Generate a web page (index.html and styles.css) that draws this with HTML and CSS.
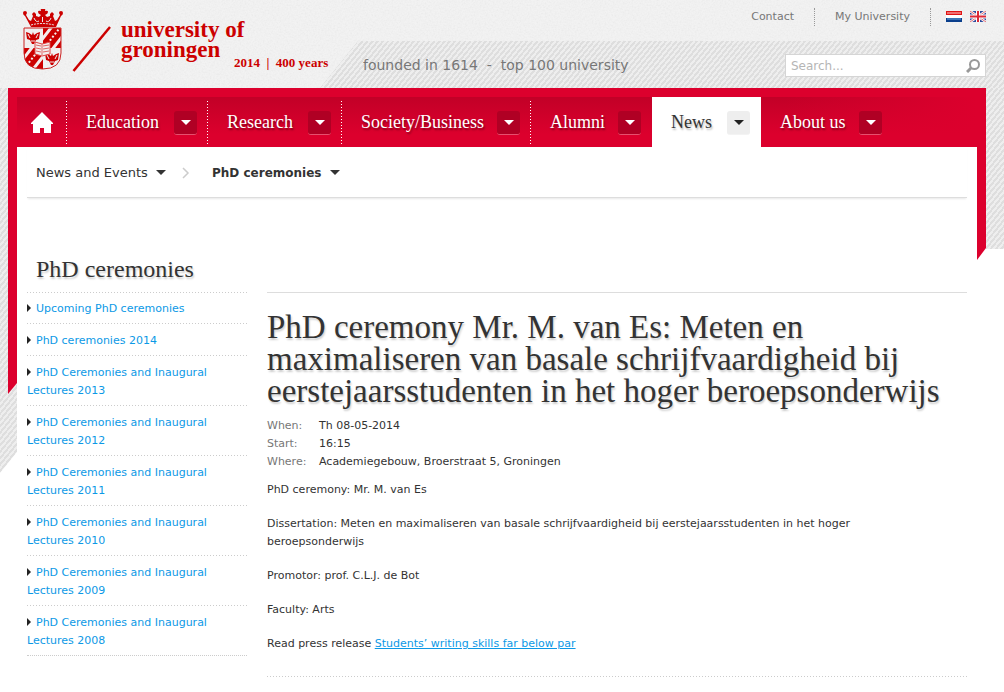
FILE: index.html
```html
<!DOCTYPE html>
<html lang="en">
<head>
<meta charset="utf-8">
<title>PhD ceremony Mr. M. van Es | University of Groningen</title>
<link rel="stylesheet" href="styles.css">
</head>
<body>
<header class="masthead">
  <a class="logo" href="#" aria-label="University of Groningen">
    <svg class="crest" width="40" height="62" viewBox="0 0 40 62" aria-hidden="true">
      <path fill="#c00" d="M0 4q0-2 2-2t2 2l-1 2 3 5 2 1 2-5-1-2 2-2 2 2v2l3 1 2-2q-3-1-3-3t3-1q-1-3 2-3t2 3q3-1 3 1t-3 3l2 2 3-1V5l2-2 2 2-1 2 2 5 2-1 3-5-1-2q0-2 2-2t2 2-2 3l-5 11H8L2 7Q0 6 0 4z"/>
      <path d="M11 9q2 5 5 3M28 9q-2 5-5 3M19.500 8v5" stroke="#eee" fill="none"/>
      <path d="M8 16q11-3 23 0" stroke="#eee" stroke-dasharray="2 1" fill="none"/>
      <clipPath id="shield"><path d="M1 19h37v25q0 16-18.500 16Q1 60 1 44z"/></clipPath>
      <g clip-path="url(#shield)">
        <path d="M20 18h19v21H20zM0 39h20v22H0z" fill="#c00"/>
        <path d="M17 33 31 15M28 42 42 24M-3 54 11 36M8 63 22 45" stroke="#f3eded" stroke-width="3"/>
        <path d="M22 38 39 16M1 60 18 38" stroke="#f3eded" stroke-width="2" stroke-dasharray="2 2"/>
        <path d="M3 23l3 1 3 2 1-3 1 3 3-2 3-1-1 7-3 1-2 4h-2l-2-4-3-1zM22 44l3 1 3 2 1-3 1 3 3-2 3-1-1 7-3 1-2 4h-2l-2-4-3-1z" fill="#c00"/>
        <path d="M5 25l2 4M15 25l-2 4M8 32h4M24 46l2 4M34 46l-2 4M27 53h4" stroke="#eee"/>
        <path d="M12 33l7 2 8-2v12l-8 2-7-2z" fill="#f3eded" stroke="#d44"/>
        <path d="M13 36l5 1m2 0 6-1M13 39l5 1m2 0 6-1M13 42l5 1m2 0 6-1M19 35v11" stroke="#d66"/>
      </g>
      <path d="M1 19h37v25q0 16-18.500 16Q1 60 1 44z" fill="none" stroke="#c22"/>
    </svg>
    <svg class="slash" width="40" height="46" viewBox="0 0 40 46" aria-hidden="true"><path d="M1.500 45 38 1" stroke="#c00" stroke-width="2.500"/></svg>
    <span class="wordmark">university of<br>groningen</span>
    <span class="jubilee">2014&nbsp; | &nbsp;400 years</span>
  </a>
  <nav class="utility" aria-label="Utility">
    <a href="#">Contact</a>
    <a href="#">My University</a>
    <span class="flags">
      <a href="#" aria-label="Nederlands"><svg width="16" height="11" viewBox="0 0 16 11"><path fill="#fff" d="M0 0h16v11H0z"/><path fill="#e01515" d="M0 0h16v4H0z"/><path fill="#ef7070" d="M1 1h14v2H1z"/><path fill="#0a3f8c" d="M0 7h16v4H0z"/><path fill="#3a74b5" d="M1 7h14v2H1z"/></svg></a>
      <a href="#" aria-label="English"><svg width="16" height="11" viewBox="0 0 16 11"><path fill="#2d4a9d" d="M0 0h16v11H0z"/><path d="M0 0l16 11M16 0 0 11" stroke="#fff" stroke-width="2.500"/><path d="M0 0l16 11M16 0 0 11" stroke="#e06a70"/><path d="M8 0v11M0 5.500h16" stroke="#fff" stroke-width="4"/><path d="M8 0v11M0 5.500h16" stroke="#dc2938" stroke-width="2"/></svg></a>
    </span>
  </nav>
  <div class="banner">
    <p class="slogan">founded in 1614&nbsp; -&nbsp; top 100 university</p>
    <form class="search" role="search">
      <input type="search" aria-label="Search" placeholder="Search...">
      <button type="button" aria-label="Search"><svg width="14" height="14" viewBox="0 0 14 14"><circle cx="8.500" cy="5.500" r="4.500" fill="none" stroke="#999" stroke-width="2"/><path d="M5 9l-4 4" stroke="#999" stroke-width="3"/></svg></button>
    </form>
  </div>
</header>

<div class="frame">
  <div class="stripes stripes-left"></div>
  <div class="stripes stripes-right"></div>
  <div class="top-bar"></div>
  <div class="rail rail-left"></div>
  <div class="rail rail-right"></div>

  <div class="sheet">
    <nav class="main-nav" aria-label="Main">
      <a class="home" href="#" aria-label="Home"><svg width="22" height="22" viewBox="0 0 22 22"><path fill="#fff" d="M11 0 0 11v1h2v9h7v-5h4v5h7v-9h2v-1z"/></svg></a>
      <div class="item education"><a href="#">Education</a><button type="button" aria-label="Education menu"><i class="caret"></i></button></div>
      <div class="item research"><a href="#">Research</a><button type="button" aria-label="Research menu"><i class="caret"></i></button></div>
      <div class="item society"><a href="#">Society/Business</a><button type="button" aria-label="Society/Business menu"><i class="caret"></i></button></div>
      <div class="item alumni"><a href="#">Alumni</a><button type="button" aria-label="Alumni menu"><i class="caret"></i></button></div>
      <div class="item active"><a href="#">News</a><button type="button" aria-label="News menu"><i class="caret"></i></button></div>
      <div class="item about"><a href="#">About us</a><button type="button" aria-label="About us menu"><i class="caret"></i></button></div>
    </nav>

    <nav class="crumbs" aria-label="Breadcrumb">
      <a href="#">News and Events <i class="caret"></i></a>
      <svg class="chevron" width="8" height="12" viewBox="0 0 8 12" aria-hidden="true"><path d="M1 1l5 5-5 5" fill="none" stroke="#ccc" stroke-width="1.500"/></svg>
      <a class="current" href="#">PhD ceremonies <i class="caret"></i></a>
    </nav>

    <div class="columns">
      <aside class="side">
        <h2>PhD ceremonies</h2>
        <ul>
          <li><a href="#">Upcoming PhD ceremonies</a></li>
          <li><a href="#">PhD ceremonies 2014</a></li>
          <li><a href="#">PhD Ceremonies and Inaugural Lectures 2013</a></li>
          <li><a href="#">PhD Ceremonies and Inaugural Lectures 2012</a></li>
          <li><a href="#">PhD Ceremonies and Inaugural Lectures 2011</a></li>
          <li><a href="#">PhD Ceremonies and Inaugural Lectures 2010</a></li>
          <li><a href="#">PhD Ceremonies and Inaugural Lectures 2009</a></li>
          <li><a href="#">PhD Ceremonies and Inaugural Lectures 2008</a></li>
        </ul>
      </aside>
      <main class="article">
        <h1>PhD ceremony Mr. M. van Es: Meten en<br>maximaliseren van basale schrijfvaardigheid bij<br>eerstejaarsstudenten in het hoger beroepsonderwijs</h1>
        <dl>
          <dt>When:</dt><dd>Th 08-05-2014</dd>
          <dt>Start:</dt><dd>16:15</dd>
          <dt>Where:</dt><dd>Academiegebouw, Broerstraat 5, Groningen</dd>
        </dl>
        <p>PhD ceremony: Mr. M. van Es</p>
        <p>Dissertation: Meten en maximaliseren van basale schrijfvaardigheid bij eerstejaarsstudenten in het hoger beroepsonderwijs</p>
        <p>Promotor: prof. C.L.J. de Bot</p>
        <p>Faculty: Arts</p>
        <p>Read press release <a href="#">Students’ writing skills far below par</a></p>
      </main>
    </div>
  </div>
</div>
</body>
</html>
```
FILE: styles.css
```css
:root {
  --red: #dc002d;
  --ink: #333;
  --link: #0c99e6;
  --sans: Verdana, "DejaVu Sans", sans-serif;
  --serif: Georgia, "Liberation Serif", serif;
  --stripes: repeating-linear-gradient(129deg, #dedede 0 2px, #eee 2px 4px);
  --noise: url("data:image/svg+xml,%3Csvg xmlns='http://www.w3.org/2000/svg' width='120' height='120'%3E%3Cfilter id='n'%3E%3CfeTurbulence type='fractalNoise' baseFrequency='.6' numOctaves='2' stitchTiles='stitch'/%3E%3CfeColorMatrix values='0 0 0 0 .5 0 0 0 0 .5 0 0 0 0 .5 .25 0 0 0 -.09'/%3E%3C/filter%3E%3Crect width='120' height='120' filter='url(%23n)'/%3E%3C/svg%3E");
}
* { box-sizing: border-box; }
body { margin: 0; background: #fff; color: var(--ink); font: 11px/18px var(--sans); }
a { color: var(--link); text-decoration: none; }
h1, h2, p, ul, dl, dd { margin: 0; padding: 0; }
button { border: 0; padding: 0; cursor: pointer; }

.masthead {
  display: grid;
  grid-template-columns: 320px 1fr;
  grid-template-rows: 41px 47px;
  background: var(--noise) #f2f2f2;
}
.logo {
  grid-row: 1 / 3;
  display: grid;
  grid-template-columns: 40px 40px 104px auto;
  column-gap: 9px;
  align-items: start;
  padding: 9px 0 0 23px;
  color: #c00;
  white-space: nowrap;
}
.slash { margin-top: 17px; }
.wordmark { font: bold 23px/20px var(--serif); padding-top: 11px; }
.jubilee { font: bold 13px/16px var(--serif); padding-top: 46px; z-index: 1; }

.utility { display: flex; justify-content: flex-end; align-items: flex-start; padding: 8px 18px 0 0; }
.utility > a { color: #777; padding: 0 20px; border-right: 1px dotted #999; }
.flags { display: flex; gap: 8px; padding: 3px 0 0 15px; }
.flags a, .flags svg { display: block; }

.banner {
  display: flex;
  justify-content: space-between;
  align-items: flex-start;
  padding: 13px 18px 0 43px;
  background: var(--stripes);
  clip-path: polygon(38px 0, 100% 0, 100% 100%, 0 100%);
}
.slogan { font-size: 14px; line-height: 22px; color: #777; }
.search { display: flex; align-items: center; width: 201px; height: 23px; padding: 0 5px; background: #fff; border: 1px solid #d5d5d5; }
.search input { flex: 1; min-width: 0; border: 0; padding: 0; outline: 0; background: none; font: 12px/18px var(--sans); }
.search input::placeholder { color: #b5b5b5; opacity: 1; }
.search button { display: flex; background: none; }

.frame { display: grid; grid-template-columns: 8px 9px minmax(0, 1fr) 9px 18px; grid-template-rows: 9px auto; }
.stripes { background: var(--stripes); align-self: start; grid-row: 1 / 3; }
.stripes-left { grid-column: 1 / 3; height: 385px; clip-path: polygon(0 0, 100% 0, 100% 364px, 0 100%); }
.stripes-right { grid-column: 5; height: 161px; }
.top-bar { grid-area: 1 / 2 / 2 / 5; background: var(--red); z-index: 1; }
.rail { grid-row: 2; align-self: start; background: var(--red); }
.rail-left { grid-column: 2; height: 297px; clip-path: polygon(0 0, 100% 0, 100% 286px, 0 100%); }
.rail-right { grid-column: 4; height: 163px; clip-path: polygon(0 0, 100% 0, 100% 151px, 0 100%); }
.sheet { grid-area: 2 / 3; }

.main-nav {
  display: flex;
  height: 50px;
  background: linear-gradient(90deg, transparent 80%, var(--red)), linear-gradient(#c20027, var(--red) 75%);
}
.home { width: 50px; padding: 15px 0 0 14px; }
.item { display: flex; align-items: flex-start; justify-content: space-between; padding: 14px 11px 0 19px; }
.home, .item { background: repeating-linear-gradient(#fff 0 1px, transparent 1px 3px) right 4px / 1px 43px no-repeat; }
.education { width: 141px; }
.research { width: 134px; }
.society { width: 189px; }
.alumni { width: 121px; background: none; }
.item.active { width: 109px; background: #fff; }
.about { width: 132px; background: none; }
.item a { font: 18px/22px var(--serif); color: #fff; text-shadow: 1px 2px 2px rgba(0, 0, 0, .4); }
.item.active a { color: var(--ink); text-shadow: 1px 2px 2px rgba(0, 0, 0, .3); }
.item button { display: flex; align-items: center; justify-content: center; width: 23px; height: 24px; border-radius: 3px; background: #b00024; border-bottom: 1px solid #e6506e; color: #fff; }
.item.active button { background: #eee; border-color: #f3f3f3; color: #222; }
.caret { display: inline-block; border: 5px solid transparent; border-top-color: currentColor; border-bottom: 0; }

.crumbs { display: flex; align-items: center; margin: 0 10px; padding: 1px 9px 0; height: 51px; border-bottom: 1px solid #ddd; box-shadow: 0 2px 2px -1px #e8e8e8; font-size: 13px; }
.crumbs a { color: var(--ink); }
.crumbs .caret { margin: 0 0 2px 4px; }
.chevron { margin: 0 22px 0 16px; }
.crumbs .current { font-size: 12px; font-weight: bold; }

.columns { display: grid; grid-template-columns: 220px minmax(0, 1fr); column-gap: 20px; padding: 0 10px; }
.side { padding-top: 57px; }
.side h2 { padding: 0 0 9px 9px; font: 24px/28px var(--serif); text-shadow: 1px 2px 2px rgba(0, 0, 0, .2); }
.side ul { list-style: none; }
.side li { padding: 8px 0 5px; background: repeating-linear-gradient(90deg, #ccc 0 1px, transparent 1px 3px) top / 100% 1px no-repeat; }
.side li + li { padding-top: 9px; }
.side li:last-child { border-bottom: 1px dotted #ccc; }
.side a::before { content: ""; display: inline-block; margin-right: 5px; border: 4px solid transparent; border-left-color: #222; border-right: 0; }
.article { margin-top: 94px; padding-bottom: 24px; border-top: 1px solid #ddd; background: repeating-linear-gradient(90deg, #ccc 0 1px, transparent 1px 3px) bottom / 100% 1px no-repeat; align-self: start; }
.article h1 { margin: 18px 0 10px; font: 33px/32px var(--serif); text-shadow: 1px 2px 2px rgba(0, 0, 0, .2); }
.article dl { display: grid; grid-template-columns: 52px 1fr; margin-bottom: 10px; }
.article dt { color: #777; }
.article p { padding-right: 24px; }
.article p + p { margin-top: 16px; }
.article p a { text-decoration: underline; }
```
